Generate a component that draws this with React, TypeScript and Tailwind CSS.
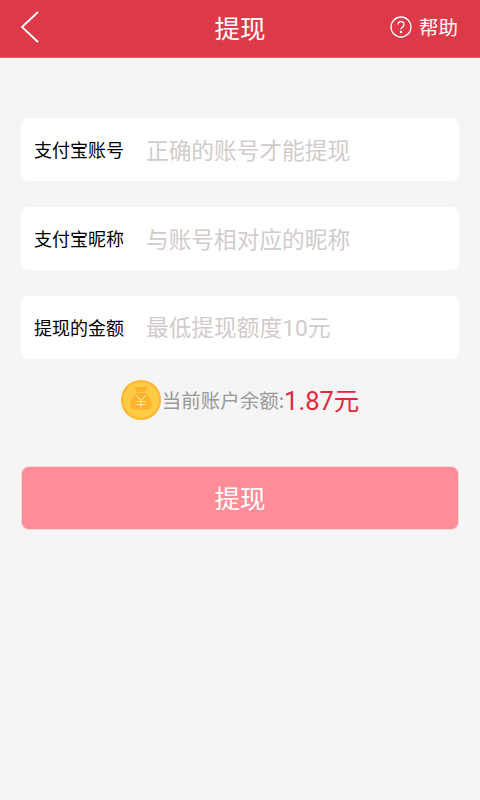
import React from 'react';

const cjk = 'font-["Noto_Sans_CJK_SC","Noto_Sans",sans-serif]';
const latin = 'font-["Roboto",sans-serif]';

const fields: { label: string; hint: React.ReactNode }[] = [
  { label: '支付宝账号', hint: '正确的账号才能提现' },
  { label: '支付宝昵称', hint: '与账号相对应的昵称' },
  { label: '提现的金额', hint: <>最低提现额度<span className={latin}>10</span>元</> },
];

function MoneyBag() {
  return (
    <svg width="40" height="40" viewBox="0 0 40 40" className="shrink-0">
      <circle cx="20" cy="20" r="20" fill="#ffb52e" />
      <circle cx="20" cy="20" r="18" fill="#ffca45" />
      <path d="M13 6.500c2.500 1.300 4.500.6 7 .6s4.500-.7 7-.6l-3 5.500h-8z" fill="#fdb32b" />
      <path d="M16 13h8c3.500 2.500 7 8 7 11.500 0 3-2 5-5 5H14c-3 0-5-2-5-5C9 21 12.500 15.500 16 13z" fill="#fdb32b" />
      <path d="M15.500 15.500l4.500 5 4.500-5M20 20.500v7M15.500 21.500h9M15.500 24.500h9" fill="none" stroke="#ffe6a8" strokeWidth="1.100" />
    </svg>
  );
}

export default function App() {
  return (
    <div className={`w-[480px] h-[800px] bg-[#f5f5f5] ${cjk}`}>
      <header className="h-[58px] bg-[#dd3a49] flex items-center justify-between text-white border-b border-[#e8606b]">
        <button className="pl-[20px] w-[100px] pb-[4px]">
          <svg width="20" height="34" viewBox="0 0 20 34" fill="none" stroke="white" strokeWidth="1.800">
            <path d="M18 2L2 17l16 15" />
          </svg>
        </button>
        <h1 className="text-[25.500px] leading-none pb-[3px]">提现</h1>
        <div className="w-[100px] pr-[22px] pb-[3px] flex items-center justify-end gap-[7px]">
          <svg width="22" height="22" viewBox="0 0 22 22" fill="none" stroke="white" strokeWidth="1.300" className="shrink-0">
            <circle cx="11" cy="11" r="10" />
            <path d="M8 8.500a3 3 0 1 1 4.500 2.600c-1 .6-1.500 1.100-1.500 2.400" />
            <circle cx="11" cy="16" r=".6" fill="white" />
          </svg>
          <span className="text-[19.500px] leading-none whitespace-nowrap">帮助</span>
        </div>
      </header>

      <main className="px-[21px] pt-[60px] flex flex-col">
        <div className="flex flex-col gap-[26px]">
          {fields.map((f) => (
            <div key={f.label} className="h-[63px] bg-white rounded-[8px] flex items-center pl-[13px]">
              <span className="w-[112px] text-[18px] text-black whitespace-nowrap">{f.label}</span>
              <span className="pt-[1px] text-[22.700px] text-[#d2cbcb] whitespace-nowrap">{f.hint}</span>
            </div>
          ))}
        </div>

        <div className="mt-[1px] h-[80px] flex items-center justify-center">
          <MoneyBag />
          <span className="ml-[1px] text-[19.500px] text-[#999999] whitespace-nowrap">当前账户余额:</span>
          <span className="text-[25.500px] text-[#dd2a3d] whitespace-nowrap">
            <span className={latin}>1.87</span>元
          </span>
        </div>

        <button className="mt-[26px] h-[64px] pb-[2px] bg-[#fe8d97] border border-[#fbd5d9] rounded-[8px] text-white text-[25.500px]">
          提现
        </button>
      </main>
    </div>
  );
}
